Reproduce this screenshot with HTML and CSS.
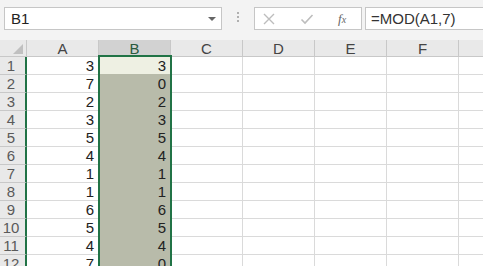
FILE: index.html
```html
<!DOCTYPE html>
<html lang="ja">
<head>
  <meta charset="UTF-8">
  <title>Excel MOD</title>
  <link rel="stylesheet" href="styles.css">
</head>
<body>
  <!-- Barra de fórmulas -->
  <div class="toolbar">
    <div class="namebox">
      <span>B1</span>
      <span class="arrow"></span>
    </div>
    <div class="dots"><i></i><i></i><i></i></div>
    <div class="fbtns">
      <svg class="ico" width="14" height="14" viewBox="0 0 14 14"><path d="M2 2 L12 12 M12 2 L2 12" stroke="#bdbdbd" stroke-width="1.4" fill="none"/></svg>
      <svg class="ico" width="14" height="14" viewBox="0 0 14 14"><path d="M1.5 7.5 L5 11 L12.5 3" stroke="#bdbdbd" stroke-width="1.6" fill="none"/></svg>
      <span class="fx">f<small>x</small></span>
    </div>
    <div class="finput">=MOD(A1,7)</div>
  </div>

  <div class="sheet" id="sheet">
    <div class="corner"><span class="tri"></span></div>
    <div class="colhead">A</div>
    <div class="colhead sel">B</div>
    <div class="colhead">C</div>
    <div class="colhead">D</div>
    <div class="colhead">E</div>
    <div class="colhead">F</div>
    <div class="colhead"></div>
    <div class="selection"></div>
  </div>

  <script>
    const a = [3, 7, 2, 3, 5, 4, 1, 1, 6, 5, 4, 7];
    const sheet = document.getElementById('sheet');
    let html = '';
    a.forEach((v, i) => {
      html += `<div class="rowhead">${i + 1}</div>`;
      html += `<div class="cell">${v}</div>`;
      html += `<div class="cell b${i === 0 ? ' active' : ''}">${v % 7}</div>`;
      html += '<div class="cell"></div><div class="cell"></div><div class="cell"></div><div class="cell"></div><div class="cell"></div>';
    });
    sheet.insertAdjacentHTML('beforeend', html);
  </script>
</body>
</html>
```

FILE: styles.css
```css
body {
  margin: 0;
  width: 483px;
  height: 266px;
  overflow: hidden;
  background: #ffffff;
  font-family: 'Liberation Sans', Arial, sans-serif;
  color: #222;
}

/* Barra superior */
.toolbar {
  display: flex;
  height: 33px;
  padding-top: 7px;
  background-color: #f3f3f3;
}

.namebox {
  margin-left: 4px;
  width: 205px;
  height: 21px;
  padding: 0 5px 0 6px;
  border: 1px solid #c6c6c6;
  background: #fff;
  display: flex;
  align-items: center;
  justify-content: space-between;
  font-size: 15px;
}

.arrow {
  width: 0;
  height: 0;
  border-left: 4px solid transparent;
  border-right: 4px solid transparent;
  border-top: 4px solid #666;
}

.dots {
  width: 32px;
  display: flex;
  flex-direction: column;
  align-items: center;
  gap: 2px;
  padding-top: 5px;
}
.dots i {
  width: 2px;
  height: 2px;
  background: #b0b0b0;
}

.fbtns {
  width: 99px;
  height: 21px;
  border: 1px solid #c6c6c6;
  background: #fff;
  display: flex;
  align-items: center;
  padding-left: 7px;
  gap: 24px;
}
.fx {
  font-family: 'Liberation Serif', serif;
  font-style: italic;
  font-size: 13px;
  color: #666;
}
.fx small {
  font-size: 10px;
}

.finput {
  margin-left: 3px;
  flex: 1;
  height: 21px;
  border: 1px solid #c6c6c6;
  border-right: none;
  background: #fff;
  padding-left: 5px;
  display: flex;
  align-items: center;
  font-size: 15px;
  color: #333;
}

/* Hoja */
.sheet {
  position: relative;
  display: grid;
  grid-template-columns: 27px repeat(7, 72px);
  grid-template-rows: 17px;
  grid-auto-rows: 18px;
  font-size: 15px;
}

.corner {
  background: #e9e9e9;
  border-right: 1px solid #c8c8c8;
  border-bottom: 1px solid #c8c8c8;
  box-sizing: border-box;
  position: relative;
}
.tri {
  position: absolute;
  right: 3px;
  bottom: 2px;
  width: 0;
  height: 0;
  border-left: 10px solid transparent;
  border-bottom: 10px solid #c0c0c0;
}

.colhead {
  background: #e9e9e9;
  border-right: 1px solid #c8c8c8;
  border-bottom: 1px solid #c8c8c8;
  box-sizing: border-box;
  text-align: center;
  line-height: 17px;
  color: #444;
}
.colhead.sel {
  background: #d2d2d2;
  color: #2a5a3e;
  border-bottom: 2px solid #217346;
}

.rowhead {
  background: #e9e9e9;
  border-right: 2px solid #217346;
  border-bottom: 1px solid #c8c8c8;
  box-sizing: border-box;
  text-align: center;
  padding-right: 3px;
  line-height: 18px;
  color: #5a5a5a;
}

.cell {
  border-right: 1px solid #dadada;
  border-bottom: 1px solid #dadada;
  box-sizing: border-box;
  text-align: right;
  padding-right: 4px;
  line-height: 18px;
}
.cell.b {
  background: #b8bbaa;
  border-bottom-color: #b8bbaa;
}
.cell.b.active {
  background: #eef0e3;
}

.selection {
  position: absolute;
  left: 98px;
  top: 15px;
  width: 70px;
  height: 300px;
  border: 2px solid #217346;
  pointer-events: none;
}
```
